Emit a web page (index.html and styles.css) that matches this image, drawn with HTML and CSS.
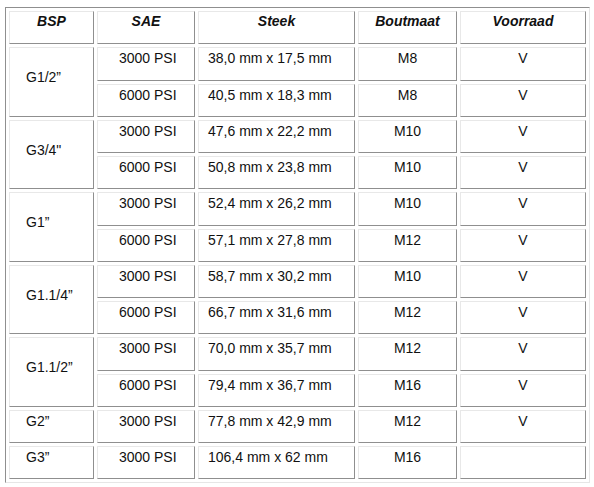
FILE: index.html
```html
<!DOCTYPE html>
<html>
<head>
<meta charset="utf-8">
<link rel="stylesheet" href="styles.css">
</head>
<body>
<table class="spec">
  <thead>
    <tr>
      <th class="c-bsp">BSP</th>
      <th class="c-sae">SAE</th>
      <th class="c-steek">Steek</th>
      <th class="c-bout">Boutmaat</th>
      <th class="c-voor">Voorraad</th>
    </tr>
  </thead>
  <tbody>
    <tr><td class="bsp group" rowspan="2">G1/2”</td><td class="sae">3000 PSI</td><td class="steek">38,0 mm x 17,5 mm</td><td class="mid">M8</td><td class="mid">V</td></tr>
    <tr><td class="sae">6000 PSI</td><td class="steek">40,5 mm x 18,3 mm</td><td class="mid">M8</td><td class="mid">V</td></tr>
    <tr><td class="bsp group" rowspan="2">G3/4"</td><td class="sae">3000 PSI</td><td class="steek">47,6 mm x 22,2 mm</td><td class="mid">M10</td><td class="mid">V</td></tr>
    <tr><td class="sae">6000 PSI</td><td class="steek">50,8 mm x 23,8 mm</td><td class="mid">M10</td><td class="mid">V</td></tr>
    <tr><td class="bsp group" rowspan="2">G1”</td><td class="sae">3000 PSI</td><td class="steek">52,4 mm x 26,2 mm</td><td class="mid">M10</td><td class="mid">V</td></tr>
    <tr><td class="sae">6000 PSI</td><td class="steek">57,1 mm x 27,8 mm</td><td class="mid">M12</td><td class="mid">V</td></tr>
    <tr><td class="bsp group" rowspan="2">G1.1/4”</td><td class="sae">3000 PSI</td><td class="steek">58,7 mm x 30,2 mm</td><td class="mid">M10</td><td class="mid">V</td></tr>
    <tr><td class="sae">6000 PSI</td><td class="steek">66,7 mm x 31,6 mm</td><td class="mid">M12</td><td class="mid">V</td></tr>
    <tr><td class="bsp group" rowspan="2">G1.1/2”</td><td class="sae">3000 PSI</td><td class="steek">70,0 mm x 35,7 mm</td><td class="mid">M12</td><td class="mid">V</td></tr>
    <tr><td class="sae">6000 PSI</td><td class="steek">79,4 mm x 36,7 mm</td><td class="mid">M16</td><td class="mid">V</td></tr>
    <tr><td class="bsp">G2”</td><td class="sae">3000 PSI</td><td class="steek">77,8 mm x 42,9 mm</td><td class="mid">M12</td><td class="mid">V</td></tr>
    <tr><td class="bsp">G3”</td><td class="sae">3000 PSI</td><td class="steek">106,4 mm x 62 mm</td><td class="mid">M16</td><td class="mid"></td></tr>
  </tbody>
</table>
</body>
</html>
```
FILE: styles.css
```css
html, body {
  background: #ffffff;
}
body {
  margin: 7px 0 0 5px;
  font-family: "Liberation Sans", Arial, sans-serif;
  font-size: 14px;
  color: #111;
}
.spec {
  table-layout: fixed;
  width: 585px;
  border-collapse: separate;
  border-spacing: 3px;
  border-style: solid;
  border-width: 1px;
  border-color: #8f8f8f #e6e6e6 #e6e6e6 #8f8f8f;
}
.spec tr {
  height: 33.27px;
}
.spec th,
.spec td {
  box-sizing: border-box;
  border-style: solid;
  border-width: 1px;
  border-color: #e8e8e8 #8f8f8f #8f8f8f #e8e8e8;
  padding: 2px 2px 0 2px;
  line-height: 16px;
  vertical-align: top;
  white-space: nowrap;
}
.spec th {
  font-weight: bold;
  font-style: italic;
  text-align: center;
  padding-top: 1px;
}
.c-bsp { width: 85px; }
.c-sae { width: 98px; }
.c-steek { width: 157px; }
.c-bout { width: 99px; }
.c-voor { width: 126px; }

.spec td.bsp {
  padding-left: 16px;
  text-align: left;
}
.spec td.group {
  padding-top: 21px;
}
.spec td.sae {
  padding-left: 21px;
  text-align: left;
}
.spec td.steek {
  padding-left: 9px;
  text-align: left;
}
.spec td.mid {
  text-align: center;
}
```
